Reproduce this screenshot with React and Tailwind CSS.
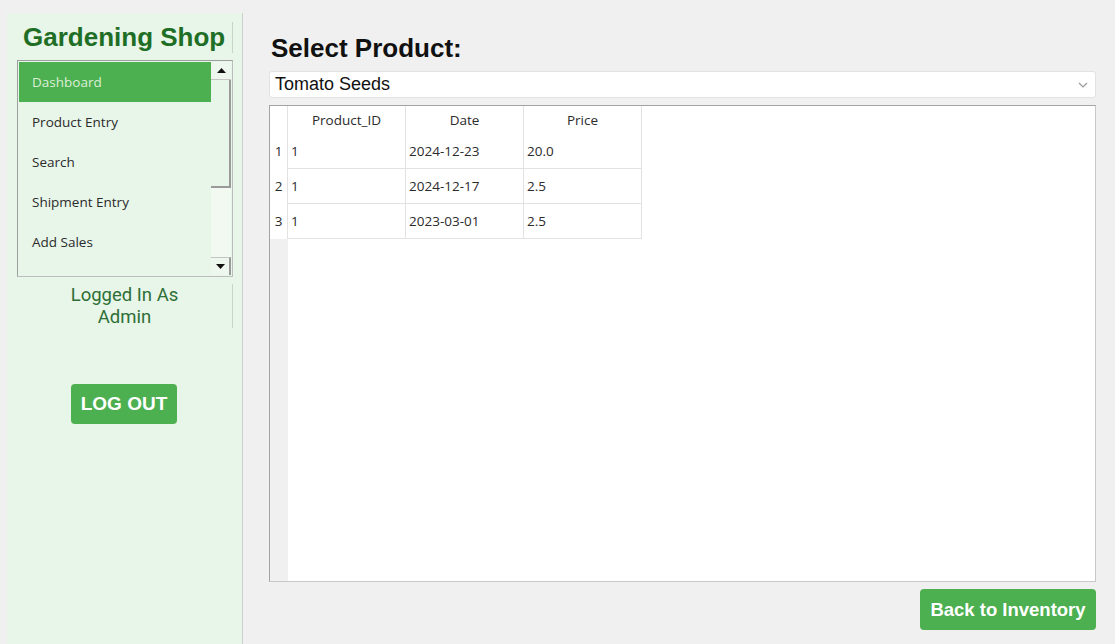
import React from "react";

const menu = ["Dashboard", "Product Entry", "Search", "Shipment Entry", "Add Sales"];

const rows = [
  { id: "1", date: "2024-12-23", price: "20.0" },
  { id: "1", date: "2024-12-17", price: "2.5" },
  { id: "1", date: "2023-03-01", price: "2.5" },
];

function Sidebar() {
  return (
    <div className="ml-[7px] mt-[13px] flex w-[236px] shrink-0 flex-col border-r border-[#cfcfcf] bg-[#e8f5e9]">
      {/* title */}
      <div className="mt-[9px] flex h-[31px] w-[226px] items-center">
        <h1 className="w-[225px] pl-[16px] font-['Liberation_Sans',Arial,sans-serif] text-[26px] leading-[31px] font-bold whitespace-nowrap text-[#1f6e25]">
          Gardening Shop
        </h1>
        <div className="h-[31px] w-px shrink-0 bg-[#c9d3c9]" />
      </div>

      {/* listbox */}
      <div className="mt-[7px] ml-[10px] flex h-[217px] w-[216px] border border-[#9e9e9e] border-r-[#bdbdbd] border-b-[#bdbdbd] p-px">
        <ul className="flex-1 overflow-hidden font-['Open_Sans',sans-serif] text-[13.5px]">
          {menu.map((m, i) => (
            <li
              key={m}
              className={
                "flex h-[40px] items-center pl-[13px] " +
                (i === 0 ? "bg-[#4caf50] text-[#dcefd8]" : "text-[#2b2b2b]")
              }
            >
              {m}
            </li>
          ))}
        </ul>
        {/* scrollbar */}
        <div className="flex w-[20px] flex-col bg-[#f1f9f1]">
          <div className="flex h-[18px] items-center justify-center border-b border-[#c4c4c4] bg-[#eef7ee]">
            <svg width="9" height="5" viewBox="0 0 9 5"><path d="M4.5 0L9 5H0z" fill="#111" /></svg>
          </div>
          <div className="h-[108px] border-r-2 border-b-2 border-[#9a9a9a] bg-[#e8f5e9]" />
          <div className="flex-1" />
          <div className="flex h-[18px] items-center justify-center border-t border-r-2 border-[#c4c4c4] border-r-[#9a9a9a] bg-[#eef7ee]">
            <svg width="9" height="5" viewBox="0 0 9 5"><path d="M0 0H9L4.5 5z" fill="#111" /></svg>
          </div>
        </div>
      </div>

      {/* logged in */}
      <div className="mt-[7px] ml-[10px] flex w-[216px] items-stretch">
        <div className="flex h-[44px] w-[215px] flex-col items-center justify-center font-['Roboto',sans-serif] text-[18.5px] leading-[22px] text-[#2e6f36]">
          <span>Logged In As</span>
          <span>Admin</span>
        </div>
        <div className="w-px bg-[#c9d3c9]" />
      </div>

      <div className="mt-[56px] flex w-[226px] justify-center pl-[8px]">
        <button className="h-[40px] w-[106px] rounded-[4px] bg-[#4caf50] font-['Liberation_Sans',Arial,sans-serif] text-[19px] font-bold text-white">
          LOG OUT
        </button>
      </div>
    </div>
  );
}

function DataTable() {
  return (
    <div className="mt-[7px] flex h-[477px] w-[827px] flex-col border border-[#a3a3a3] border-r-[#c8c8c8] border-b-[#c8c8c8] bg-white font-['Open_Sans',sans-serif] text-[13.5px] text-[#2b2b2b]">
      <div className="flex">
        <div className="w-[18px] border-r border-[#e2e2e2]" />
        {["Product_ID", "Date", "Price"].map((h) => (
          <div key={h} className="flex h-[28px] w-[118px] items-center justify-center border-r border-[#e2e2e2]">
            {h}
          </div>
        ))}
      </div>
      {rows.map((r, i) => (
        <div key={i} className="flex">
          <div className="flex w-[18px] items-center justify-center border-r border-[#e2e2e2]">{i + 1}</div>
          {[r.id, r.date, r.price].map((v, j) => (
            <div
              key={j}
              className="flex h-[35px] w-[118px] items-center border-r border-b border-[#e2e2e2] pl-[3px]"
            >
              {v}
            </div>
          ))}
        </div>
      ))}
      <div className="flex flex-1">
        <div className="w-[18px] bg-[#f0f0f0]" />
      </div>
    </div>
  );
}

export default function App() {
  return (
    <div className="flex h-[644px] w-[1115px] overflow-hidden bg-[#f0f0f0]">
      <Sidebar />
      <main className="flex flex-1 flex-col pl-[26px]">
        <h2 className="mt-[33px] h-[30px] pl-[2px] font-['Liberation_Sans',Arial,sans-serif] text-[26px] leading-[30px] font-bold text-[#111]">
          Select Product:
        </h2>
        <div className="mt-[8px] flex h-[27px] w-[827px] items-center justify-between rounded-[3px] border border-[#e2e2e2] bg-white pr-[7px] pl-[5px]">
          <span className="font-['Liberation_Sans',Arial,sans-serif] text-[18px] text-[#111]">Tomato Seeds</span>
          <svg width="10" height="6" viewBox="0 0 10 6">
            <path d="M1 1l4 4 4-4" fill="none" stroke="#9a9a9a" strokeWidth="1.2" />
          </svg>
        </div>
        <DataTable />
        <div className="mt-[7px] flex w-[827px] justify-end">
          <button className="h-[41px] w-[176px] rounded-[4px] bg-[#4caf50] font-['Liberation_Sans',Arial,sans-serif] text-[18.5px] font-bold text-white">
            Back to Inventory
          </button>
        </div>
      </main>
    </div>
  );
}
